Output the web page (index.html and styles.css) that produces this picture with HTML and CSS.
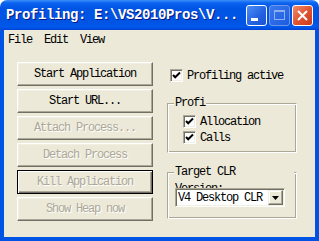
FILE: index.html
```html
<!DOCTYPE html>
<html lang="en">

<head>
    <meta charset="UTF-8">
    <title>Profiling</title>
    <link rel="stylesheet" href="styles.css">
</head>

<body>
    <div class="window">
        <div class="titlebar">
            <span class="title">Profiling: E:\VS2010Pros\V...</span>
            <div class="caption-btns">
                <span class="cap">
                    <svg width="19" height="19" viewBox="0 0 19 19"><rect x="4" y="12" width="7" height="3" fill="#fff"/></svg>
                </span>
                <span class="cap off">
                    <svg width="19" height="19" viewBox="0 0 19 19"><rect x="4.5" y="4.5" width="10" height="9" fill="none" stroke="#8fb0ee"/><rect x="4" y="4" width="11" height="2" fill="#8fb0ee"/></svg>
                </span>
                <span class="cap close">
                    <svg width="19" height="19" viewBox="0 0 19 19"><path d="M5 5 L14 14 M14 5 L5 14" stroke="#fff" stroke-width="2"/></svg>
                </span>
            </div>
        </div>
        <div class="frame">
            <div class="menubar">
                <span>File</span>
                <span>Edit</span>
                <span>View</span>
            </div>
            <div class="client">
                <div class="buttons">
                    <button class="btn">Start Application</button>
                    <button class="btn">Start URL...</button>
                    <button class="btn disabled">Attach Process...</button>
                    <button class="btn disabled">Detach Process</button>
                    <button class="btn disabled default">Kill Application</button>
                    <button class="btn disabled">Show Heap now</button>
                </div>
                <div class="options">
                    <label class="check top">
                        <span class="box"><svg width="9" height="9" viewBox="0 0 9 9"><path d="M1 4 L3.2 6.3 L8 1.5" fill="none" stroke="#000" stroke-width="2"/></svg></span>
                        Profiling active
                    </label>
                    <div class="group g1">
                        <span class="legend">Profi</span>
                        <label class="check">
                            <span class="box"><svg width="9" height="9" viewBox="0 0 9 9"><path d="M1 4 L3.2 6.3 L8 1.5" fill="none" stroke="#000" stroke-width="2"/></svg></span>
                            Allocation
                        </label>
                        <label class="check">
                            <span class="box"><svg width="9" height="9" viewBox="0 0 9 9"><path d="M1 4 L3.2 6.3 L8 1.5" fill="none" stroke="#000" stroke-width="2"/></svg></span>
                            Calls
                        </label>
                    </div>
                    <div class="group g2">
                        <span class="legend wide">Target CLR<br>Version:</span>
                        <div class="combo">
                            <span class="combo-text">V4 Desktop CLR</span>
                            <span class="combo-btn">
                                <svg width="7" height="4" viewBox="0 0 7 4"><path d="M0 0 H7 L3.5 4 Z" fill="#000"/></svg>
                            </span>
                        </div>
                    </div>
                </div>
            </div>
        </div>
    </div>
</body>

</html>
```

FILE: styles.css
```css
* {
    box-sizing: border-box;
}

body {
    margin: 0;
    background: #fff;
    font-family: "Liberation Mono", monospace;
    font-size: 12px;
    letter-spacing: -1.2px;
    color: #000;
}

.window {
    width: 319px;
    height: 241px;
    display: flex;
    flex-direction: column;
    background: #ece9d8;
    border-radius: 7px 7px 0 0;
    overflow: hidden;
}

.titlebar {
    height: 30px;
    flex: none;
    display: flex;
    align-items: center;
    padding: 0 6px 0 6px;
    background: linear-gradient(#3d8ef7 0, #0a63f0 3px, #0055e5 8px, #0054e3 22px, #0059ec 27px, #0042d4 30px);
}

.title {
    flex: 1;
    color: #fff;
    font-weight: bold;
    font-size: 14px;
    letter-spacing: -0.4px;
    text-shadow: 1px 1px #0a1883;
    white-space: nowrap;
}

.caption-btns {
    display: flex;
    gap: 2px;
}

.cap {
    width: 21px;
    height: 21px;
    border: 1px solid #fff;
    border-radius: 3px;
    background: linear-gradient(135deg, #4f8ef7, #2261e0 60%, #1a53d4);
    display: flex;
}

.cap.off {
    border-color: #6f96ea;
    background: linear-gradient(135deg, #3b79ec, #1d5be0);
}

.cap.close {
    background: linear-gradient(135deg, #f08a6c, #e0512e 55%, #c83c1c);
}

.frame {
    flex: 1;
    display: flex;
    flex-direction: column;
    border: 4px solid #0054e3;
    border-top: 0;
}

.menubar {
    height: 19px;
    flex: none;
    display: flex;
    align-items: center;
    gap: 12px;
    padding-left: 4px;
}

.client {
    flex: 1;
    display: flex;
    gap: 14px;
    padding: 13px 0 0 13px;
}

.buttons {
    width: 136px;
    display: flex;
    flex-direction: column;
    gap: 3px;
}

.btn {
    height: 24px;
    padding: 0;
    font: inherit;
    letter-spacing: inherit;
    color: #000;
    background: #ece9d8;
    border: 1px solid;
    border-color: #fff #716f64 #716f64 #fff;
    box-shadow: inset -1px -1px #aca899, inset 1px 1px #f1efe2;
}

.btn.disabled {
    color: #aca899;
    text-shadow: 1px 1px #fff;
}

.btn.default {
    border-color: #000;
    box-shadow: inset 1px 1px #fff, inset -1px -1px #716f64, inset -2px -2px #aca899;
}

.options {
    width: 130px;
    display: flex;
    flex-direction: column;
    padding-top: 7px;
}

.check {
    display: flex;
    align-items: center;
    gap: 4px;
    height: 13px;
}

.check.top {
    margin-left: 3px;
}

.box {
    width: 13px;
    height: 13px;
    flex: none;
    display: flex;
    align-items: center;
    justify-content: center;
    background: #fff;
    border: 1px solid;
    border-color: #aca899 #fff #fff #aca899;
    box-shadow: inset 1px 1px #716f64, inset -1px -1px #f1efe2;
}

.group {
    position: relative;
    border: 1px solid;
    border-color: #aca899 #fff #fff #aca899;
    box-shadow: inset 1px 1px #fff, inset -1px -1px #aca899;
}

.legend {
    position: absolute;
    left: 6px;
    top: -8px;
    line-height: 14px;
    padding: 0 1px;
    background: #ece9d8;
}

.legend.wide {
    width: 120px;
    line-height: 17px;
    top: -9px;
}

.g1 {
    margin-top: 21px;
    height: 50px;
    display: flex;
    flex-direction: column;
    gap: 3px;
    padding: 11px 0 0 15px;
}

.g2 {
    margin-top: 19px;
    height: 47px;
    padding: 15px 0 0 7px;
}

.combo {
    position: relative;
    width: 110px;
    height: 19px;
    display: flex;
    align-items: center;
    background: #fff;
    border: 1px solid;
    border-color: #aca899 #fff #fff #aca899;
    box-shadow: inset 1px 1px #716f64, inset -1px -1px #f1efe2;
    padding: 1px;
}

.combo-text {
    flex: 1;
    padding-left: 1px;
}

.combo-btn {
    width: 15px;
    height: 15px;
    display: flex;
    align-items: center;
    justify-content: center;
    background: #ece9d8;
    border: 1px solid;
    border-color: #f1efe2 #716f64 #716f64 #f1efe2;
    box-shadow: inset -1px -1px #aca899, inset 1px 1px #fff;
}
```
